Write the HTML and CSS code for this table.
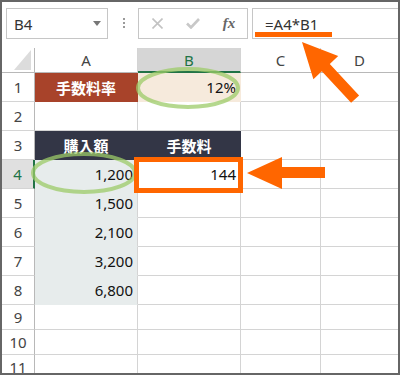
FILE: index.html
```html
<!DOCTYPE html>
<html lang="ja">
<head>
<meta charset="utf-8">
<title>手数料の計算</title>
<link rel="stylesheet" href="styles.css">
</head>
<body>
<div class="frame">
  <div class="toolbar">
    <div class="namebox"><span>B4</span><span class="caret"></span></div>
    <div class="dots"><i></i><i></i><i></i></div>
    <div class="fbtns">
      <span class="slot"><svg width="11" height="11" viewBox="0 0 11 11"><path d="M0.5 0.5 L10.5 10.5 M10.5 0.5 L0.5 10.5" stroke="#c3c3c3" stroke-width="1.6" fill="none"/></svg></span>
      <span class="slot"><svg width="14" height="11" viewBox="0 0 14 11"><path d="M1 5.5 L5 9.5 L13 1" stroke="#c8c8c8" stroke-width="2.6" fill="none"/></svg></span>
      <span class="slot fx">fx</span>
    </div>
    <div class="formula">=A4*B1</div>
  </div>
  <div class="sheet">
    <div class="c corner"><svg width="32" height="24" viewBox="0 0 32 24"><polygon points="29,2 29,22 12,22" fill="#dcdcdc"/></svg></div>
    <div class="c ch">A</div>
    <div class="c ch sel-col">B</div>
    <div class="c ch">C</div>
    <div class="c ch last">D</div>

    <div class="c rh">1</div>
    <div class="c lbl-red">手数料率</div>
    <div class="c num beige">12%</div>
    <div class="c"></div>
    <div class="c last"></div>

    <div class="c rh">2</div>
    <div class="c"></div>
    <div class="c"></div>
    <div class="c"></div>
    <div class="c last"></div>

    <div class="c rh">3</div>
    <div class="c lbl-navy">購入額</div>
    <div class="c lbl-navy">手数料</div>
    <div class="c"></div>
    <div class="c last"></div>

    <div class="c rh sel-row">4</div>
    <div class="c num fill">1,200</div>
    <div class="c num">144</div>
    <div class="c"></div>
    <div class="c last"></div>

    <div class="c rh">5</div>
    <div class="c num fill">1,500</div>
    <div class="c"></div>
    <div class="c"></div>
    <div class="c last"></div>

    <div class="c rh">6</div>
    <div class="c num fill">2,100</div>
    <div class="c"></div>
    <div class="c"></div>
    <div class="c last"></div>

    <div class="c rh">7</div>
    <div class="c num fill">3,200</div>
    <div class="c"></div>
    <div class="c"></div>
    <div class="c last"></div>

    <div class="c rh">8</div>
    <div class="c num fill">6,800</div>
    <div class="c"></div>
    <div class="c"></div>
    <div class="c last"></div>

    <div class="c rh">9</div>
    <div class="c"></div>
    <div class="c"></div>
    <div class="c"></div>
    <div class="c last"></div>

    <div class="c rh">10</div>
    <div class="c"></div>
    <div class="c"></div>
    <div class="c"></div>
    <div class="c last"></div>

    <div class="c rh">11</div>
    <div class="c"></div>
    <div class="c"></div>
    <div class="c"></div>
    <div class="c last"></div>
  </div>
  <svg class="overlay" width="400" height="375" viewBox="0 0 400 375">
    <rect x="255" y="32" width="77" height="5" fill="#ff6600"/>
    <ellipse cx="188" cy="88" rx="50" ry="19" fill="none" stroke="#9ccb68" stroke-opacity="0.75" stroke-width="4"/>
    <ellipse cx="84" cy="173" rx="51" ry="19" fill="none" stroke="#9ccb68" stroke-opacity="0.75" stroke-width="4"/>
    <rect x="136.5" y="159.5" width="104" height="31" fill="none" stroke="#ff6600" stroke-width="5"/>
    <polygon points="247,173 282,157 282,167 325,167 325,178 282,178 282,189" fill="#ff6600"/>
    <polygon points="302,42 338.2,56 329.8,63.9 359.1,95.4 351.1,102.8 321.8,71.3 313.4,79.2" fill="#ff6600"/>
  </svg>
</div>
</body>
</html>
```
FILE: styles.css
```css
* { box-sizing: border-box; }
html, body { margin: 0; padding: 0; background: #fff; }
body { font-family: "Noto Sans", "Liberation Sans", "Noto Sans CJK JP", sans-serif; color: #222; }

.frame {
  position: relative;
  width: 400px;
  height: 375px;
  border: 2px solid #666;
  overflow: hidden;
  background: #fff;
}

.toolbar {
  height: 46px;
  display: flex;
  align-items: flex-start;
  padding: 6px 0 0 4px;
}
.namebox {
  width: 102px;
  height: 31px;
  border: 1px solid #c6c6c6;
  display: flex;
  align-items: center;
  justify-content: space-between;
  padding: 0 6px 0 7px;
  font-size: 15px;
  color: #333;
}
.caret {
  width: 0; height: 0;
  border-left: 4px solid transparent;
  border-right: 4px solid transparent;
  border-top: 5px solid #777;
}
.dots {
  margin: 10px 0 0 15px;
  display: flex;
  flex-direction: column;
  gap: 2px;
}
.dots i { display: block; width: 2px; height: 2px; background: #9a9a9a; }
.fbtns {
  margin-left: 13px;
  width: 110px;
  height: 31px;
  border: 1px solid #c6c6c6;
  display: flex;
  align-items: center;
}
.slot { width: 36px; display: flex; justify-content: center; align-items: center; }
.fx {
  font-family: "Liberation Serif", serif;
  font-style: italic;
  font-weight: bold;
  font-size: 15px;
  color: #666;
}
.formula {
  margin-left: 4px;
  flex: 1;
  height: 31px;
  border: 1px solid #c6c6c6;
  border-right: none;
  display: flex;
  align-items: center;
  padding-left: 12px;
  font-size: 15px;
  color: #333;
}

.sheet {
  display: grid;
  grid-template-columns: 33px 103px 103px 80px 77px;
  grid-template-rows: 25px repeat(8, 29px) repeat(3, 25px);
}
.c {
  border-right: 1px solid #d4d4d4;
  border-bottom: 1px solid #d4d4d4;
  display: flex;
  align-items: center;
  font-size: 15px;
  color: #111;
  overflow: hidden;
}
.c.last { border-right: none; }
.corner { border-right-color: #b8b8b8; border-bottom-color: #b8b8b8; }
.corner svg { display: block; }
.ch { justify-content: center; color: #444; border-bottom-color: #b8b8b8; }
.rh { justify-content: center; color: #444; border-right-color: #b8b8b8; }
.sel-col { background: #d6d6d6; color: #217346; border-bottom: 2px solid #217346; }
.sel-row { background: #e0e0e0; color: #217346; border-right: 2px solid #217346; }
.num { justify-content: flex-end; padding-right: 4px; }
.beige { background: #f6eadc; border-color: #f6eadc; }
.fill { background: #e7ecec; border-bottom-color: #e7ecec; }
.lbl-red, .lbl-navy {
  justify-content: center;
  color: #fff;
  font-family: "Noto Sans CJK JP", sans-serif;
  font-weight: bold;
  font-size: 15px;
}
.lbl-red { background: #a8432a; border-color: #a8432a; }
.lbl-navy { background: #333646; border-color: #333646; }

.overlay {
  position: absolute;
  left: -2px;
  top: -2px;
  pointer-events: none;
}
```
